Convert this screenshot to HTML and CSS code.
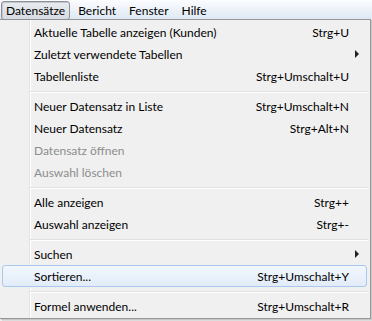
FILE: index.html
```html
<!DOCTYPE html>
<html lang="de">
<head>
    <meta charset="UTF-8">
    <title>Datensätze</title>
    <link rel="stylesheet" href="styles.css">
</head>
<body>
    <div class="menubar">
        <span class="top-item open">Datensätze</span>
        <span class="top-item">Bericht</span>
        <span class="top-item">Fenster</span>
        <span class="top-item">Hilfe</span>
    </div>

    <div class="menu">
        <div class="item"><span class="label">Aktuelle Tabelle anzeigen (Kunden)</span><span class="key">Strg+U</span><span class="sub"></span></div>
        <div class="item"><span class="label">Zuletzt verwendete Tabellen</span><span class="key"></span><span class="sub"><i class="arrow"></i></span></div>
        <div class="item"><span class="label">Tabellenliste</span><span class="key">Strg+Umschalt+U</span><span class="sub"></span></div>
        <div class="sep"></div>
        <div class="item"><span class="label">Neuer Datensatz in Liste</span><span class="key">Strg+Umschalt+N</span><span class="sub"></span></div>
        <div class="item"><span class="label">Neuer Datensatz</span><span class="key">Strg+Alt+N</span><span class="sub"></span></div>
        <div class="item disabled"><span class="label">Datensatz öffnen</span><span class="key"></span><span class="sub"></span></div>
        <div class="item disabled"><span class="label">Auswahl löschen</span><span class="key"></span><span class="sub"></span></div>
        <div class="sep"></div>
        <div class="item"><span class="label">Alle anzeigen</span><span class="key">Strg++</span><span class="sub"></span></div>
        <div class="item"><span class="label">Auswahl anzeigen</span><span class="key">Strg+-</span><span class="sub"></span></div>
        <div class="sep"></div>
        <div class="item"><span class="label">Suchen</span><span class="key"></span><span class="sub"><i class="arrow"></i></span></div>
        <div class="item hover"><span class="label">Sortieren...</span><span class="key">Strg+Umschalt+Y</span><span class="sub"></span></div>
        <div class="sep"></div>
        <div class="item"><span class="label">Formel anwenden...</span><span class="key">Strg+Umschalt+R</span><span class="sub"></span></div>
    </div>
</body>
</html>
```

FILE: styles.css
```css
body {
    margin: 0;
    width: 372px;
    height: 321px;
    overflow: hidden;
    font-family: Lato, "Noto Sans", sans-serif;
    font-size: 12px;
    color: #000;
    background: #f0f0f0;
}
.menubar {
    display: flex;
    height: 19px;
    padding-left: 1px;
    background: linear-gradient(#fbfcfe, #dfe8f3);
}
.top-item {
    display: flex;
    align-items: center;
    height: 17px;
    margin-top: 1px;
    margin-right: 3px;
    padding: 0 4px;
    border: 1px solid transparent;
}
.top-item.open {
    border-color: #8e9298;
    border-radius: 3px;
    background: linear-gradient(#e8ebef, #d8dce2);
    box-shadow: inset 1px 1px 0 #c4c8ce;
}
.menu {
    width: 370px;
    border-top: 1px solid #979797;
    border-right: 1px solid #979797;
    border-bottom: 1px solid #979797;
    padding: 1px 0 1px;
    background:
        linear-gradient(to right, transparent 29px, #e2e3e3 29px, #e2e3e3 30px, #fff 30px, #fff 31px, transparent 31px),
        #f0f0f0;
    box-shadow: 1px 1px 0 #c8c8c8, 2px 2px 0 #dcdcdc;
}
.item {
    display: flex;
    align-items: center;
    height: 20px;
    margin: 0 3px 0 2px;
    padding-left: 31px;
    border: 1px solid transparent;
    border-radius: 3px;
    white-space: nowrap;
}
.item .label {
    flex: 1;
}
.item .key {
    text-align: right;
}
.item .sub {
    display: flex;
    align-items: center;
    width: 17px;
    height: 100%;
}
.arrow {
    display: block;
    margin-left: 6px;
    width: 0;
    height: 0;
    border-top: 4px solid transparent;
    border-bottom: 4px solid transparent;
    border-left: 4px solid #222;
}
.item.disabled {
    color: #8d8d8d;
}
.item.hover {
    border-color: #a8c8ec;
    background: linear-gradient(#f2f7fd, #e2ecf9);
}
.sep {
    height: 4px;
    margin: 0 2px 3px 30px;
    border-bottom: 1px solid #e0e0e0;
    box-shadow: 0 1px 0 #fff;
}
```
